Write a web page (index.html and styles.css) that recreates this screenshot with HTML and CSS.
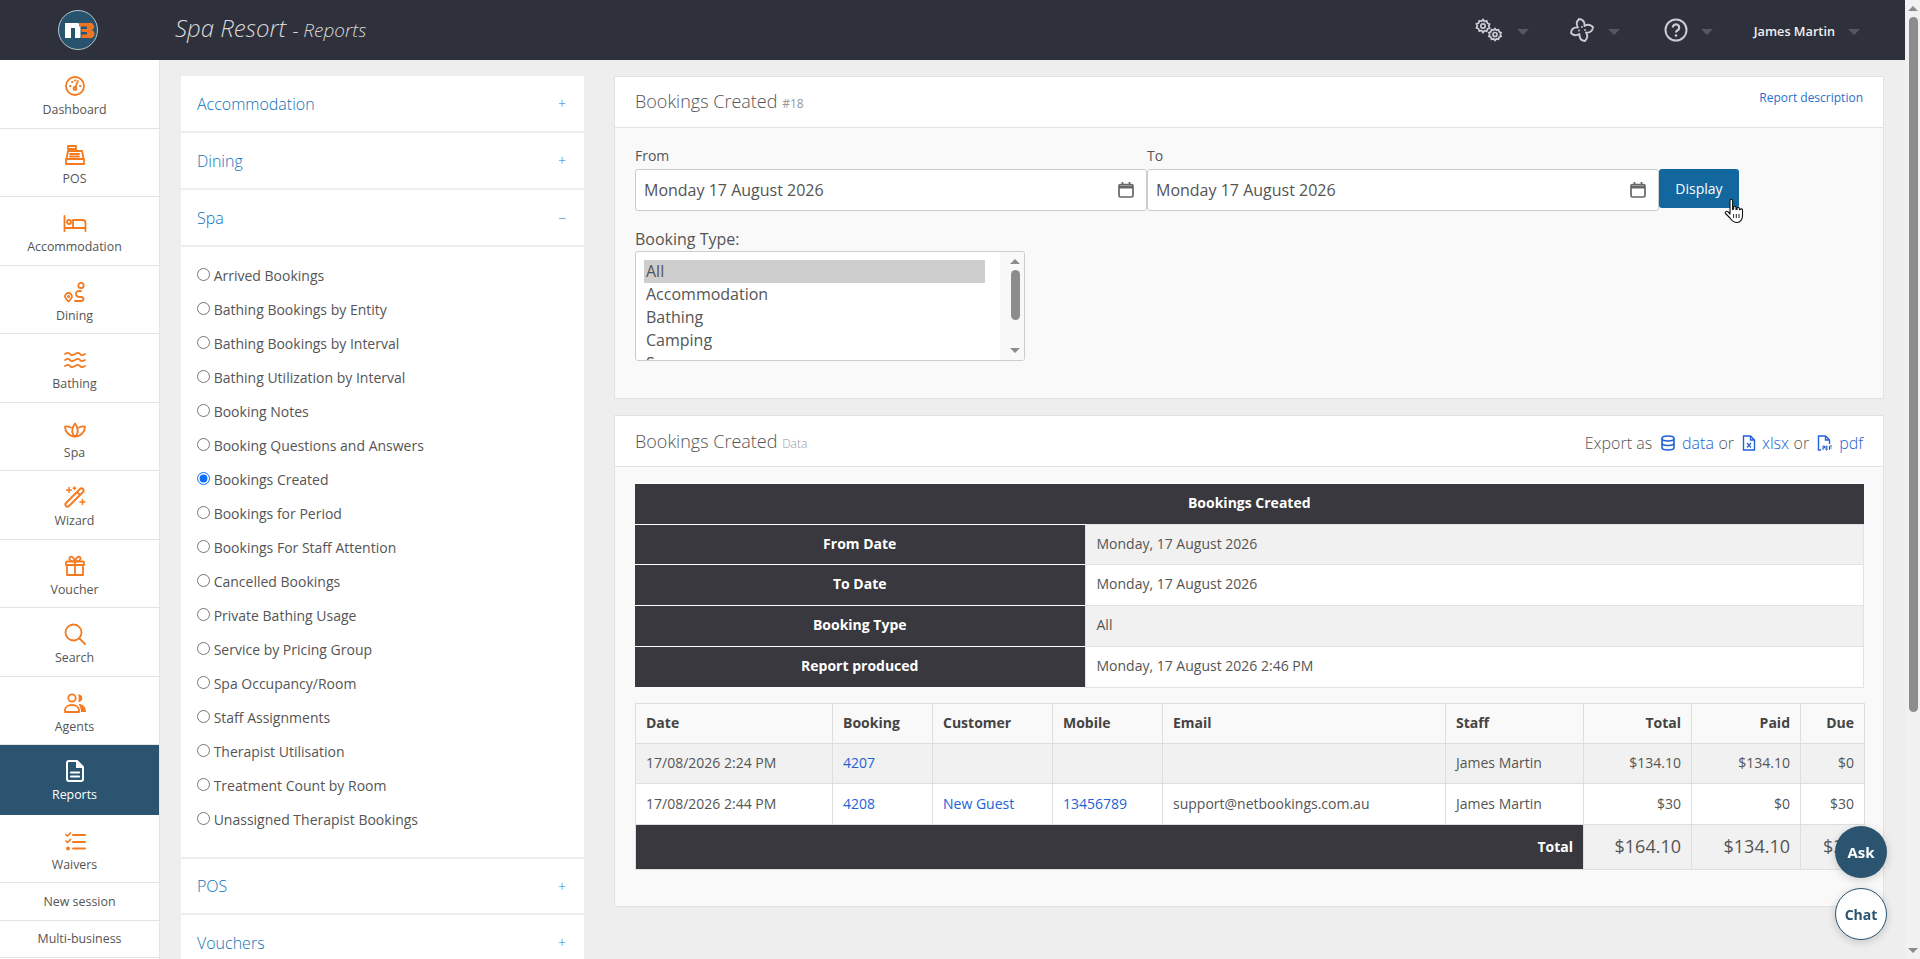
FILE: index.html
```html
<!DOCTYPE html>
<html lang="en">
<head>
<meta charset="utf-8">
<title>Spa Resort - Reports</title>
<link rel="stylesheet" href="styles.css">
</head>
<body>
<div class="page">
  <div class="viewport">
    <header class="topbar">
      <div class="logo-cell">
        <svg class="logo" viewBox="0 0 40 40" width="40" height="40"><circle cx="20" cy="20" r="19.500" fill="#28536e" stroke="#b9c4cb"/><path d="M7 13h12a3.500 3.500 0 0 1 3.500 3.500V28H17V18h-4v10H7z" fill="#fff"/><path d="M21 13h10a3.500 3.500 0 0 1 2.600 7A3.900 3.900 0 0 1 31 28h-7.500v-3.500H29v-2.500h-5.500v-3H29v-2.500h-8z" fill="#ee7623"/></svg>
      </div>
      <div class="page-title">Spa Resort <span class="page-sub">- Reports</span></div>
      <nav class="top-tools">
        <svg class="tool-gears" viewBox="0 0 30 24" width="30" height="24" fill="none" stroke="#c9ccd1" stroke-width="1.700"><circle cx="9" cy="8" r="2.200"/><path d="M9 1.500l1.400 2 2.300-.6.700 2.300 2.200.9-1 2 1 2-2.200.9-.7 2.300-2.300-.6L9 14.500l-1.400-2-2.300.6-.7-2.300-2.200-.9 1-2-1-2 2.200-.9.700-2.300 2.300.6z"/><circle cx="21" cy="16.500" r="2"/><path d="M21 10.500l1.400 1.700 2.100-.5.600 2.100 2 .9-.9 1.800.9 1.800-2 .9-.6 2.100-2.100-.5-1.400 1.700-1.400-1.700-2.100.5-.6-2.100-2-.9.900-1.800-.9-1.800 2-.9.600-2.100 2.100.5z"/></svg>
        <span class="caret"></span>
        <svg class="tool-fan" viewBox="0 0 24 24" width="24" height="24" fill="none" stroke="#c9ccd1" stroke-width="1.800" stroke-linejoin="round"><path d="M9 1Q15 1.500 14.500 8Q19 5 23 9Q22.500 15 16 14.500Q19 19 15 23Q9 22.500 9.500 16Q5 19 1 15Q1.500 9 8 9.500Q5 5 9 1Z"/><circle cx="12" cy="9" r=".9" fill="#c9ccd1" stroke="none"/><circle cx="15" cy="12" r=".9" fill="#c9ccd1" stroke="none"/><circle cx="9" cy="12.500" r=".9" fill="#c9ccd1" stroke="none"/></svg>
        <span class="caret"></span>
        <svg class="tool-help" viewBox="0 0 24 24" width="24" height="24" fill="none" stroke="#c9ccd1" stroke-width="2"><circle cx="12" cy="12" r="10.500"/><path d="M8.800 9.500a3.200 3.200 0 1 1 4.800 2.800c-1 .6-1.600 1.100-1.600 2.200" stroke-width="2.200"/><circle cx="12" cy="17.500" r="1.300" fill="#c9ccd1" stroke="none"/></svg>
        <span class="caret"></span>
        <span class="user-name">James Martin</span>
        <span class="caret caret-user"></span>
      </nav>
    </header>
    <div class="shell">
      <aside class="sidebar">
        <a class="side-item">
          <svg class="side-icon" viewBox="0 0 24 24"><circle cx="12" cy="12" r="9"/><path d="M12 14l3-7"/><circle cx="12" cy="14.500" r="1.500"/><path d="M7 12h.5M9 8h.5M12 6.500h.5M17 12h.5" stroke-width="2"/></svg>
          <span>Dashboard</span>
        </a>
        <a class="side-item">
          <svg class="side-icon" viewBox="0 0 24 24"><path d="M5 3h8v3H5zM9 6v2M5 8h14l1.500 8H3.500zM3 16h18v5H3z"/><path d="M7 11h10M7 13.500h10" stroke-dasharray="1.500 1"/></svg>
          <span>POS</span>
        </a>
        <a class="side-item">
          <svg class="side-icon" viewBox="0 0 24 24"><path d="M1.500 5v15M1.500 17h21v3M22.500 17v-5a3 3 0 0 0-3-3H10v8"/><circle cx="6" cy="11" r="2"/></svg>
          <span>Accommodation</span>
        </a>
        <a class="side-item">
          <svg class="side-icon" viewBox="0 0 24 24"><circle cx="18" cy="5.500" r="2.700"/><path d="M18 11c-4 0-5 .5-5 3s2 3 4.500 3 3 1 3 2-.5 2-2.500 2h-6"/><path d="M5.500 21.500c-2-2-3.500-3.500-3.500-5a3.500 3.500 0 0 1 7 0c0 1.500-1.500 3-3.500 5z"/><circle cx="5.500" cy="16.500" r=".7"/></svg>
          <span>Dining</span>
        </a>
        <a class="side-item">
          <svg class="side-icon" viewBox="0 0 24 24"><path d="M2 6c2.500-1.500 4-1.500 5 0s2.500 1.500 5 0 4-1.500 5 0 2.500 1.500 5 0M2 12c2.500-1.500 4-1.500 5 0s2.500 1.500 5 0 4-1.500 5 0 2.500 1.500 5 0M2 18c2.500-1.500 4-1.500 5 0s2.500 1.500 5 0 4-1.500 5 0 2.500 1.500 5 0"/></svg>
          <span>Bathing</span>
        </a>
        <a class="side-item">
          <svg class="side-icon" viewBox="0 0 24 24"><path d="M12 19.500c-3.500-2.500-4-8 0-13 4 5 3.500 10.500 0 13z"/><path d="M8 10.500C6 9.500 4 9 2 9.500c0 5 4 10 10 10 6 0 10-5 10-10-2-.5-4 0-6 1"/></svg>
          <span>Spa</span>
        </a>
        <a class="side-item">
          <svg class="side-icon" viewBox="0 0 24 24"><path d="M3 18L17 4a2 2 0 0 1 3 3L6 21a2 2 0 0 1-3-3zM14 7l3 3"/><path d="M6 2.500v5M3.500 5h5M19.500 14.500v5M17 17h5M11.500 2v2.500M10.300 3.200h2.400" stroke-width="1.500"/></svg>
          <span>Wizard</span>
        </a>
        <a class="side-item">
          <svg class="side-icon" viewBox="0 0 24 24"><path d="M4 7.500h16a1 1 0 0 1 1 1V11H3V8.500a1 1 0 0 1 1-1zM4 11v10h16V11M12 7.500V21"/><path d="M12 7.500C8 7.500 6 6 6.500 4s4-2 5.500 3.500zM12 7.500c4 0 6-1.500 5.500-3.500s-4-2-5.500 3.500z"/></svg>
          <span>Voucher</span>
        </a>
        <a class="side-item">
          <svg class="side-icon" viewBox="0 0 24 24"><circle cx="10.500" cy="10.500" r="8"/><path d="M16.500 16.500L22 22"/></svg>
          <span>Search</span>
        </a>
        <a class="side-item">
          <svg class="side-icon" viewBox="0 0 24 24"><circle cx="9" cy="7" r="3.700"/><path d="M2 21v-2c0-3 3-5 7-5s7 2 7 5v2z"/><path class="solid" d="M15 3.500a3.700 3.700 0 1 1 0 7.300c1-2 1-5 0-7.300zM15.500 13c4 0 7.500 2.500 7.500 8h-5c0-3-1-6-2.500-8z"/></svg>
          <span>Agents</span>
        </a>
        <a class="side-item side-active">
          <svg class="side-icon" viewBox="0 0 24 24"><path d="M6 2h8l6 6v12a2 2 0 0 1-2 2H6a2 2 0 0 1-2-2V4a2 2 0 0 1 2-2z" stroke-width="2"/><path class="solid" d="M13 2l7 7h-7z"/><path d="M8 13.500h8M8 17.500h8" stroke-width="2.200"/></svg>
          <span>Reports</span>
        </a>
        <a class="side-item">
          <svg class="side-icon" viewBox="0 0 24 24"><path d="M10 6h12M10 13h12M10 19.500h12" stroke-width="2"/><path d="M3 5.500l1.500 1.500L7.500 4M3 12l1.500 1.500L7.500 10.500" stroke-width="1.700"/><circle cx="5" cy="19.500" r="1"/></svg>
          <span>Waivers</span>
        </a>
        <a class="side-link">New session</a>
        <a class="side-link">Multi-business</a>
      </aside>
      <div class="content">
        <section class="menu-panel">
          <div class="menu-head"><span>Accommodation</span><span class="menu-toggle">+</span></div>
          <div class="menu-head"><span>Dining</span><span class="menu-toggle">+</span></div>
          <div class="menu-head"><span>Spa</span><span class="menu-toggle">−</span></div>
          <div class="report-list">
            <label class="report-row"><input type="radio" name="r"> Arrived Bookings</label>
            <label class="report-row"><input type="radio" name="r"> Bathing Bookings by Entity</label>
            <label class="report-row"><input type="radio" name="r"> Bathing Bookings by Interval</label>
            <label class="report-row"><input type="radio" name="r"> Bathing Utilization by Interval</label>
            <label class="report-row"><input type="radio" name="r"> Booking Notes</label>
            <label class="report-row"><input type="radio" name="r"> Booking Questions and Answers</label>
            <label class="report-row"><input type="radio" name="r" checked> Bookings Created</label>
            <label class="report-row"><input type="radio" name="r"> Bookings for Period</label>
            <label class="report-row"><input type="radio" name="r"> Bookings For Staff Attention</label>
            <label class="report-row"><input type="radio" name="r"> Cancelled Bookings</label>
            <label class="report-row"><input type="radio" name="r"> Private Bathing Usage</label>
            <label class="report-row"><input type="radio" name="r"> Service by Pricing Group</label>
            <label class="report-row"><input type="radio" name="r"> Spa Occupancy/Room</label>
            <label class="report-row"><input type="radio" name="r"> Staff Assignments</label>
            <label class="report-row"><input type="radio" name="r"> Therapist Utilisation</label>
            <label class="report-row"><input type="radio" name="r"> Treatment Count by Room</label>
            <label class="report-row"><input type="radio" name="r"> Unassigned Therapist Bookings</label>
          </div>
          <div class="menu-head menu-head-top"><span>POS</span><span class="menu-toggle">+</span></div>
          <div class="menu-head"><span>Vouchers</span><span class="menu-toggle">+</span></div>
        </section>
        <main class="report-col">
          <section class="card card-form">
            <div class="card-head">
              <h2 class="card-title">Bookings Created <small class="tag">#18</small></h2>
              <a class="desc-link">Report description</a>
            </div>
            <div class="form-body">
              <div class="date-row">
                <div class="date-field">
                  <label class="field-label">From</label>
                  <div class="date-input">Monday 17 August 2026
                    <svg class="cal" viewBox="0 0 16 16" width="16" height="16" fill="none" stroke="#666" stroke-width="1.700"><rect x="1" y="2.500" width="14" height="12.500" rx="1.500"/><path d="M1 5h14" stroke-width="3"/><path d="M4.500 0v3M11.500 0v3"/></svg>
                  </div>
                </div>
                <div class="date-field">
                  <label class="field-label">To</label>
                  <div class="date-input">Monday 17 August 2026
                    <svg class="cal" viewBox="0 0 16 16" width="16" height="16" fill="none" stroke="#666" stroke-width="1.700"><rect x="1" y="2.500" width="14" height="12.500" rx="1.500"/><path d="M1 5h14" stroke-width="3"/><path d="M4.500 0v3M11.500 0v3"/></svg>
                  </div>
                </div>
                <button class="btn-display" type="button">Display</button>
              </div>
              <div class="type-label">Booking Type:</div>
              <div class="listbox">
                <div class="list-options">
                  <div class="opt opt-selected">All</div>
                  <div class="opt">Accommodation</div>
                  <div class="opt">Bathing</div>
                  <div class="opt">Camping</div>
                  <div class="opt">Spa</div>
                </div>
                <div class="list-scroll">
                  <span class="arrow-up"></span>
                  <span class="list-thumb"></span>
                  <span class="arrow-down"></span>
                </div>
              </div>
            </div>
          </section>
          <section class="card card-data">
            <div class="card-head card-head-data">
              <h2 class="card-title">Bookings Created <small class="tag tag-data">Data</small></h2>
              <div class="export">Export as
                <svg class="exp-icon" viewBox="0 0 16 16" width="16" height="16" fill="none" stroke="#2163d6" stroke-width="1.600"><ellipse cx="8" cy="3.500" rx="6" ry="2.500"/><path d="M2 3.500v9c0 1.400 2.700 2.500 6 2.500s6-1.100 6-2.500v-9M2 8c0 1.400 2.700 2.500 6 2.500S14 9.400 14 8"/></svg>
                <a class="exp-link">data</a> or
                <svg class="exp-icon" viewBox="0 0 14 16" width="14" height="16" fill="none" stroke="#2163d6" stroke-width="1.400"><path d="M1.500 1h7l4 4v10h-11zM8.500 1v4h4"/><path d="M5 8l4 4.500M9 8l-4 4.500" stroke-width="1.200"/></svg>
                <a class="exp-link">xlsx</a> or
                <svg class="exp-icon" viewBox="0 0 16 16" width="16" height="16" fill="none" stroke="#2163d6" stroke-width="1.400"><path d="M4 15H1.500V1h7l4 4v4M8.500 1v4h4"/><path d="M6 11v4M9 11v4M12.500 11v4M6 11h1.500v2H6M9 11h1v4H9M12.500 11H15M12.500 13h2" stroke-width="1"/></svg>
                <a class="exp-link">pdf</a>
              </div>
            </div>
            <div class="data-body">
              <table class="summary">
                <colgroup><col class="c-key"><col></colgroup>
                <tr><th colspan="2" class="summary-title">Bookings Created</th></tr>
                <tr class="row-odd row-a"><th>From Date</th><td>Monday, 17 August 2026</td></tr>
                <tr class="row-a"><th>To Date</th><td>Monday, 17 August 2026</td></tr>
                <tr class="row-odd row-b"><th>Booking Type</th><td>All</td></tr>
                <tr class="row-b"><th>Report produced</th><td>Monday, 17 August 2026 2:46 PM</td></tr>
              </table>
              <table class="results">
                <colgroup>
                  <col class="c-date"><col class="c-booking"><col class="c-customer"><col class="c-mobile"><col class="c-email"><col class="c-staff"><col class="c-total"><col class="c-paid"><col class="c-due">
                </colgroup>
                <thead>
                  <tr><th>Date</th><th>Booking</th><th>Customer</th><th>Mobile</th><th>Email</th><th>Staff</th><th class="num">Total</th><th class="num">Paid</th><th class="num">Due</th></tr>
                </thead>
                <tbody>
                  <tr class="row-odd"><td>17/08/2026 2:24 PM</td><td><a class="lnk">4207</a></td><td></td><td></td><td></td><td>James Martin</td><td class="num">$134.10</td><td class="num">$134.10</td><td class="num">$0</td></tr>
                  <tr><td>17/08/2026 2:44 PM</td><td><a class="lnk">4208</a></td><td><a class="lnk">New Guest</a></td><td><a class="lnk">13456789</a></td><td>support@netbookings.com.au</td><td>James Martin</td><td class="num">$30</td><td class="num">$0</td><td class="num">$30</td></tr>
                </tbody>
                <tfoot>
                  <tr><th colspan="6" class="foot-label">Total</th><td class="num foot-val">$164.10</td><td class="num foot-val">$134.10</td><td class="num foot-val">$30</td></tr>
                </tfoot>
              </table>
            </div>
          </section>
        </main>
      </div>
    </div>
  </div>
  <div class="page-scroll">
    <span class="arrow-up"></span>
    <span class="page-thumb"></span>
    <span class="arrow-down"></span>
  </div>
</div>
<button class="fab fab-ask" type="button">Ask</button>
<button class="fab fab-chat" type="button">Chat</button>
<svg class="pointer" viewBox="0 0 20 26" width="20" height="26"><path d="M6 2.500a1.300 1.300 0 0 1 2.600 0v9l1-.2V9.500a1.200 1.200 0 0 1 2.400 0v2l1-.1v-1a1.200 1.200 0 0 1 2.400 0v1.200l.8 0a1.200 1.200 0 0 1 2.300.5V18c0 3-2 6.500-5.500 6.500-3.500 0-5-1.500-7-4.500L1.500 15.500c-1-1.500 1-3 2.300-1.800L6 16z" fill="#fff" stroke="#111" stroke-width="1.100" stroke-linejoin="round"/><path d="M9.600 16v4M12.300 16v4M15 16v4" stroke="#111" stroke-width=".9"/></svg>
</body>
</html>
```

FILE: styles.css
```css
* { box-sizing: border-box; }
html, body { margin: 0; height: 100%; overflow: hidden; }
body { font-family: "Open Sans", "Liberation Sans", sans-serif; font-size: 14px; color: #555; background: #eee; }
a { color: inherit; text-decoration: none; }

.page { display: flex; height: 959px; overflow: hidden; }
.viewport { flex: 1; min-width: 0; display: flex; flex-direction: column; }

/* scrollbar */
.page-scroll { width: 15px; background: #f1f1f1; display: flex; flex-direction: column; align-items: center; padding: 6px 0 6px; }
.page-thumb { width: 9px; height: 695px; margin-top: 6px; border-radius: 5px; background: #8c8c8c; margin-left: 2px; }
.page-scroll .arrow-down { margin-top: auto; }
.arrow-up { width: 0; height: 0; border-left: 5px solid transparent; border-right: 5px solid transparent; border-bottom: 5px solid #8c8c8c; }
.arrow-down { width: 0; height: 0; border-left: 5px solid transparent; border-right: 5px solid transparent; border-top: 5px solid #8c8c8c; }

/* top bar */
.topbar { height: 60px; flex: none; display: flex; align-items: center; background: #2e303c; color: #ccc; }
.logo-cell { width: 175px; padding-left: 58px; display: flex; }
.page-title { font-style: italic; font-size: 24px; font-weight: 300; color: #d8d8d8; margin-top: -5px; }
.page-sub { font-size: 19px; }
.top-tools { margin-left: auto; display: flex; align-items: center; padding-right: 45px; }
.caret { width: 0; height: 0; border-left: 6px solid transparent; border-right: 6px solid transparent; border-top: 6px solid #55565f; margin-top: 3px; }
.tool-gears { margin-right: 13px; }
.tool-fan { margin-left: 41px; margin-right: 14px; }
.tool-help { margin-left: 44px; margin-right: 13px; }
.user-name { margin-left: 41px; margin-top: 2px; font-size: 12.700px; font-weight: 600; color: #f0f0f0; }
.caret-user { margin-left: 13px; }

.shell { flex: 1; min-height: 0; display: flex; overflow: hidden; }

/* sidebar */
.sidebar { width: 160px; flex: none; background: #fff; border-right: 1px solid #e4e4e4; display: flex; flex-direction: column; }
.side-item { height: 68.500px; flex: none; display: flex; flex-direction: column; align-items: center; padding: 14px 10px 0 0; border-bottom: 1px solid #e4e4e4; font-size: 12.400px; line-height: 18px; color: #555; }
.side-item span { margin-top: 3px; }
.side-icon { width: 24px; height: 24px; fill: none; stroke: #f47a20; stroke-width: 1.800; stroke-linecap: round; stroke-linejoin: round; }
.side-icon .solid { fill: #f47a20; stroke: none; }
.side-active { height: 69.500px; background: #2a5470; color: #fff; border-bottom-color: #2a5470; }
.side-active .side-icon { stroke: #fff; }
.side-active .side-icon .solid { fill: #fff; }
.side-link { height: 37.500px; flex: none; display: flex; align-items: center; justify-content: center; border-bottom: 1px solid #e4e4e4; font-size: 12.400px; color: #555; }

/* content */
.content { flex: 1; min-width: 0; display: flex; gap: 30px; padding: 16px 21px 0; align-items: flex-start; }

.menu-panel { width: 403px; flex: none; background: #fff; }
.menu-head { height: 57px; display: flex; align-items: center; justify-content: space-between; padding: 0 18px 0 16px; border-bottom: 2px solid #eee; font-size: 16px; font-weight: 300; color: #0f72b8; }
.menu-toggle { font-size: 14px; color: #2a80bc; }
.menu-head-top { height: 58px; border-top: 2px solid #eee; }
.report-list { padding: 13px 16px 19px; }
.report-row { height: 34px; display: flex; align-items: center; padding-bottom: 4px; font-size: 14px; color: #555; white-space: pre; }
.report-row input { width: 13px; height: 13px; margin: 0 0 1px 0; accent-color: #0d6efd; }

.report-col { flex: 1; min-width: 0; display: flex; flex-direction: column; gap: 16px; }
.card { background: #f9f9f9; border: 1px solid #e2e2e2; }
.card-head { height: 51px; display: flex; justify-content: space-between; align-items: center; padding: 0 20px 2px; background: #fff; border-bottom: 1px solid #e2e2e2; }
.card-head-data { padding-bottom: 0; }
.card-title { margin: 0; font-size: 18px; font-weight: 300; color: #555; }
.tag { font-size: 12px; color: #999; font-weight: 400; }
.tag-data { font-weight: 300; }
.desc-link { font-size: 12px; color: #2a6fc9; align-self: flex-start; margin-top: 12px; }

.form-body { padding: 16px 20px 0; height: 270px; }
.date-row { display: flex; align-items: flex-start; }
.date-field { width: 512px; flex: none; }
.field-label { display: block; font-size: 14px; line-height: 23px; padding-bottom: 2px; color: #555; }
.date-input { height: 42px; display: flex; align-items: center; justify-content: space-between; padding: 0 12px 0 8px; background: #fff; border: 1px solid #ccc; border-radius: 3px; font-size: 16px; color: #555; }
.btn-display { margin-top: 25px; width: 80px; height: 39px; border: 0; border-radius: 3px; background: #12679f; color: #fff; font: 14px "Open Sans", sans-serif; }
.type-label { margin-top: 17px; font-size: 16px; line-height: 23px; color: #555; }
.listbox { width: 390px; height: 110px; display: flex; justify-content: space-between; overflow: hidden; background: #fff; border: 1px solid #ccc; border-radius: 3px; }
.list-options { flex: none; width: 341px; margin-left: 8px; padding-top: 8px; height: 108px; overflow: hidden; font-size: 16px; }
.opt { height: 23px; line-height: 23px; padding-left: 2px; color: #555; }
.opt-selected { background: #cecece; }
.list-scroll { width: 24px; background: #f8f8f8; display: flex; flex-direction: column; align-items: center; padding: 7px 0 7px 6px; }
.list-thumb { width: 9px; height: 50px; margin-top: 6px; border-radius: 5px; background: #8c8c8c; }
.list-scroll .arrow-down { margin-top: auto; }

.export { margin-top: 4px; font-size: 16px; font-weight: 300; color: #555; display: flex; align-items: center; gap: 4.500px; }
.exp-icon { margin-left: 3px; margin-right: 2px; }
.exp-link { color: #2163d6; }

.data-body { padding: 16px 20px 36px; }
table { border-collapse: collapse; width: 1229px; table-layout: fixed; font-size: 14px; color: #555; }
.c-key { width: 450px; }
.summary th { background: #38383e; color: #fff; font-weight: 700; border-top: 1px solid #fff; text-align: center; padding: 0 0 2px; }
.summary td { padding: 0 0 2px 11px; border: 1px solid #e2e2e2; background: #fff; }
.summary .row-odd td { background: #f1f1f1; }
.summary tr { height: 40.500px; }
.summary .row-b { height: 41px; }
.summary-title { height: 39.600px; }
.results { margin-top: 15px; }
.results th, .results td { border: 1px solid #dedede; padding: 0 10px 1px; text-align: left; white-space: nowrap; overflow: hidden; }
.results thead tr { height: 40px; }
.results tbody tr { height: 40.500px; }
.results thead th { background: #f9f9f9; font-weight: 700; color: #444; }
.results .row-odd td { background: #f1f1f1; }
.results tbody tr:not(.row-odd) td { background: #fff; }
.results .num { text-align: right; }
.results tfoot tr { height: 45px; }
.results .foot-label { background: #38383e; color: #fff; text-align: right; font-weight: 700; }
.results .foot-val { background: #f1f1f1; font-size: 18px; }
.lnk { color: #2163d6; }
.c-date { width: 197px; }
.c-booking { width: 100px; }
.c-customer { width: 120px; }
.c-mobile { width: 110px; }
.c-email { width: 283px; }
.c-staff { width: 138px; }
.c-total { width: 108px; }
.c-paid { width: 109px; }
.c-due { width: 64px; }

/* floating */
.fab { position: fixed; right: 33px; width: 52px; height: 52px; border-radius: 50%; font: 700 15px "Open Sans", sans-serif; box-shadow: 0 2px 8px rgba(0,0,0,.18); }
.fab-ask { top: 826px; background: #2a5470; color: #fff; border: 0; }
.fab-chat { top: 888px; background: #fff; color: #2a5470; border: 1px solid #2a5470; font-size: 14px; }
.pointer { position: fixed; left: 1724px; top: 198px; }
```
